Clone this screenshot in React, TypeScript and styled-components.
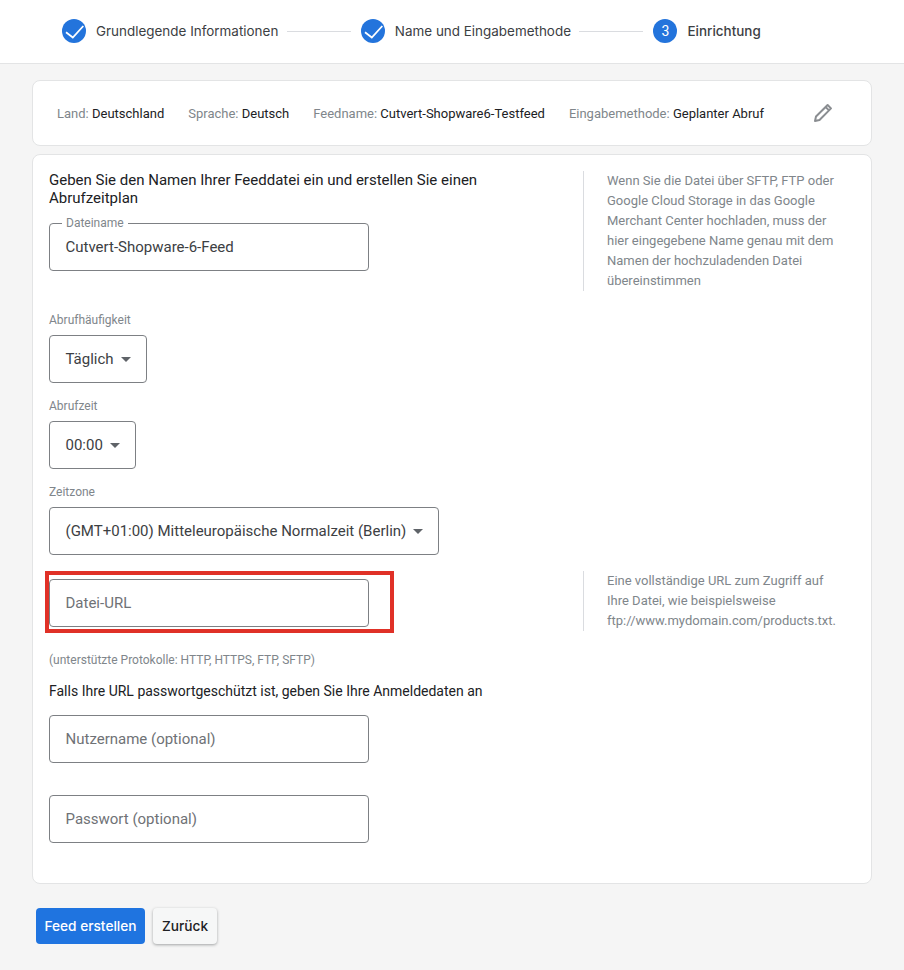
import React from "react";
import styled, { createGlobalStyle } from "styled-components";

const GlobalStyle = createGlobalStyle`
    html, body {
        margin: 0;
        padding: 0;
        background: #f5f5f5;
        font-family: Roboto, "Liberation Sans", sans-serif;
        color: #202124;
    }
`;

const Page = styled.div`
    width: 904px;
    height: 970px;
    overflow: hidden;
`;

const Header = styled.header`
    background: #fff;
    border-bottom: 1px solid #e3e4e5;
    display: flex;
    align-items: center;
    padding: 0 0 1px 62px;
    box-sizing: border-box;
    height: 64px;
`;

const Step = styled.div`
    display: flex;
    align-items: center;
    gap: 10px;
`;

const StepCircle = styled.div`
    width: 24px;
    height: 24px;
    border-radius: 50%;
    background: #2374dc;
    color: #fff;
    font-size: 14px;
    display: flex;
    align-items: center;
    justify-content: center;
`;

const StepLabel = styled.span<{ $active?: boolean }>`
    font-family: Inter, Roboto, sans-serif;
    font-size: 13.45px;
    font-weight: ${(p) => (p.$active ? 500 : 400)};
    color: #3c4043;
`;

const StepLine = styled.div`
    width: 64px;
    height: 1px;
    background: #dadce0;
    margin: 0 10px 0 8.5px;
`;

const Content = styled.main`
    padding: 16px 32px 0;
    display: flex;
    flex-direction: column;
    gap: 8px;
`;

const Card = styled.section`
    background: #fff;
    border: 1px solid #e3e4e5;
    border-radius: 8px;
`;

const SummaryCard = styled(Card)`
    height: 66px;
    box-sizing: border-box;
    display: flex;
    align-items: center;
    padding: 0 24px;
    font-size: 13px;
`;

const SummaryItem = styled.div`
    margin-right: 24px;
    white-space: nowrap;
    color: #202124;
`;

const SummaryKey = styled.span`
    color: #80868b;
`;

const EditButton = styled.div`
    display: flex;
    margin-left: 25px;
    color: #8a8d91;
`;

const FormCard = styled(Card)`
    height: 730px;
    box-sizing: border-box;
    padding: 16px 16px 0;
`;

const Row = styled.div`
    display: grid;
    grid-template-columns: 534px 1fr;
`;

const Title = styled.p`
    margin: 0;
    width: 440px;
    font-size: 15px;
    line-height: 18px;
    color: #202124;
`;

const Help = styled.aside<{ $raise?: number }>`
    border-left: 1px solid #dadce0;
    padding-left: 23px;
    margin-top: ${(p) => -(p.$raise ?? 0)}px;
    font-size: 13px;
    line-height: 20px;
    color: #80868b;
    white-space: nowrap;
`;

const FieldBox = styled.div<{ $w: number }>`
    width: ${(p) => p.$w}px;
    height: 48px;
    box-sizing: border-box;
    border: 1px solid #7d8084;
    border-radius: 4px;
    background: #fff;
    padding: 0 15.5px;
    display: flex;
    align-items: center;
    font-size: 15px;
    color: #3c4043;
    position: relative;
    white-space: nowrap;
`;

const FloatLabel = styled.span`
    position: absolute;
    top: -7px;
    left: 12px;
    padding: 0 4px;
    background: #fff;
    font-size: 12px;
    line-height: 13px;
    color: #80868b;
`;

const Placeholder = styled.span`
    color: #6f7276;
`;

const Caret = styled.span`
    width: 0;
    height: 0;
    margin-left: 7px;
    border-left: 5px solid transparent;
    border-right: 5px solid transparent;
    border-top: 5px solid #5f6368;
`;

const SmallLabel = styled.div`
    font-size: 12px;
    line-height: 14px;
    color: #80868b;
    margin-bottom: 8px;
`;

const SelectGroup = styled.div<{ $top: number }>`
    margin-top: ${(p) => p.$top}px;
`;

const Highlight = styled.div`
    position: relative;
    &::after {
        content: "";
        position: absolute;
        left: -4px;
        top: -8px;
        width: 349px;
        height: 62px;
        box-sizing: border-box;
        border: 4px solid #e03127;
    }
`;

const Hint = styled.div`
    font-size: 12px;
    line-height: 14px;
    color: #80868b;
    margin-top: 22px;
`;

const Subtitle = styled.p`
    margin: 15px 0 0;
    font-size: 14px;
    line-height: 18px;
    color: #202124;
`;

const Stack = styled.div<{ $top: number }>`
    margin-top: ${(p) => p.$top}px;
`;

const Actions = styled.div`
    display: flex;
    gap: 8px;
    padding: 16px 4px 0;
`;

const Button = styled.button<{ $primary?: boolean }>`
    height: 36px;
    border-radius: 4px;
    border: none;
    font-family: Inter, Roboto, sans-serif;
    font-size: 13.7px;
    font-weight: 500;
    padding: 0;
    width: ${(p) => (p.$primary ? "109px" : "64px")};
    background: ${(p) => (p.$primary ? "#1f74e0" : "#f6f7f7")};
    color: ${(p) => (p.$primary ? "#fff" : "#202124")};
    box-shadow: ${(p) => (p.$primary ? "none" : "0 1px 3px rgba(60,64,67,.45)")};
`;

const Check = () => (
    <svg width="20" height="16" viewBox="0 0 20 16" fill="none">
        <path d="M2 9.3 8.8 14.5 19.3 3" stroke="#fff" strokeWidth="1.8" />
    </svg>
);

const Pencil = () => (
    <svg width="20" height="20" viewBox="0 0 20 20" fill="none" stroke="currentColor" strokeWidth="2" strokeLinejoin="round">
        <path d="M2 18 3 13.5 14.6 2 18 5.4 6.5 17Z" />
        <path d="M12.6 4 16 7.4" />
    </svg>
);

const App = () => {
    return (
        <Page>
            <GlobalStyle />
            <Header>
                <Step>
                    <StepCircle><Check /></StepCircle>
                    <StepLabel>Grundlegende Informationen</StepLabel>
                </Step>
                <StepLine />
                <Step>
                    <StepCircle><Check /></StepCircle>
                    <StepLabel>Name und Eingabemethode</StepLabel>
                </Step>
                <StepLine />
                <Step>
                    <StepCircle>3</StepCircle>
                    <StepLabel $active>Einrichtung</StepLabel>
                </Step>
            </Header>
            <Content>
                <SummaryCard>
                    <SummaryItem><SummaryKey>Land:</SummaryKey> Deutschland</SummaryItem>
                    <SummaryItem><SummaryKey>Sprache:</SummaryKey> Deutsch</SummaryItem>
                    <SummaryItem><SummaryKey>Feedname:</SummaryKey> Cutvert-Shopware6-Testfeed</SummaryItem>
                    <SummaryItem><SummaryKey>Eingabemethode:</SummaryKey> Geplanter Abruf</SummaryItem>
                    <EditButton><Pencil /></EditButton>
                </SummaryCard>
                <FormCard>
                    <Row>
                        <div>
                            <Title>Geben Sie den Namen Ihrer Feeddatei ein und erstellen Sie einen Abrufzeitplan</Title>
                            <Stack $top={16}>
                                <FieldBox $w={320}>
                                    <FloatLabel>Dateiname</FloatLabel>
                                    Cutvert-Shopware-6-Feed
                                </FieldBox>
                            </Stack>
                        </div>
                        <Help>
                            Wenn Sie die Datei über SFTP, FTP oder<br />
                            Google Cloud Storage in das Google<br />
                            Merchant Center hochladen, muss der<br />
                            hier eingegebene Name genau mit dem<br />
                            Namen der hochzuladenden Datei<br />
                            übereinstimmen
                        </Help>
                    </Row>
                    <SelectGroup $top={22}>
                        <SmallLabel>Abrufhäufigkeit</SmallLabel>
                        <FieldBox $w={98}>Täglich<Caret /></FieldBox>
                    </SelectGroup>
                    <SelectGroup $top={16}>
                        <SmallLabel>Abrufzeit</SmallLabel>
                        <FieldBox $w={87}>00:00<Caret /></FieldBox>
                    </SelectGroup>
                    <SelectGroup $top={16}>
                        <SmallLabel>Zeitzone</SmallLabel>
                        <FieldBox $w={390}>(GMT+01:00) Mitteleuropäische Normalzeit (Berlin)<Caret /></FieldBox>
                    </SelectGroup>
                    <Stack $top={24}>
                        <Row>
                            <Highlight>
                                <FieldBox $w={320}><Placeholder>Datei-URL</Placeholder></FieldBox>
                            </Highlight>
                            <Help $raise={8}>
                                Eine vollständige URL zum Zugriff auf<br />
                                Ihre Datei, wie beispielsweise<br />
                                ftp://www.mydomain.com/products.txt.
                            </Help>
                        </Row>
                    </Stack>
                    <Hint>(unterstützte Protokolle: HTTP, HTTPS, FTP, SFTP)</Hint>
                    <Subtitle>Falls Ihre URL passwortgeschützt ist, geben Sie Ihre Anmeldedaten an</Subtitle>
                    <Stack $top={15}>
                        <FieldBox $w={320}><Placeholder>Nutzername (optional)</Placeholder></FieldBox>
                    </Stack>
                    <Stack $top={32}>
                        <FieldBox $w={320}><Placeholder>Passwort (optional)</Placeholder></FieldBox>
                    </Stack>
                </FormCard>
                <Actions>
                    <Button $primary>Feed erstellen</Button>
                    <Button>Zurück</Button>
                </Actions>
            </Content>
        </Page>
    );
};

export default App;
